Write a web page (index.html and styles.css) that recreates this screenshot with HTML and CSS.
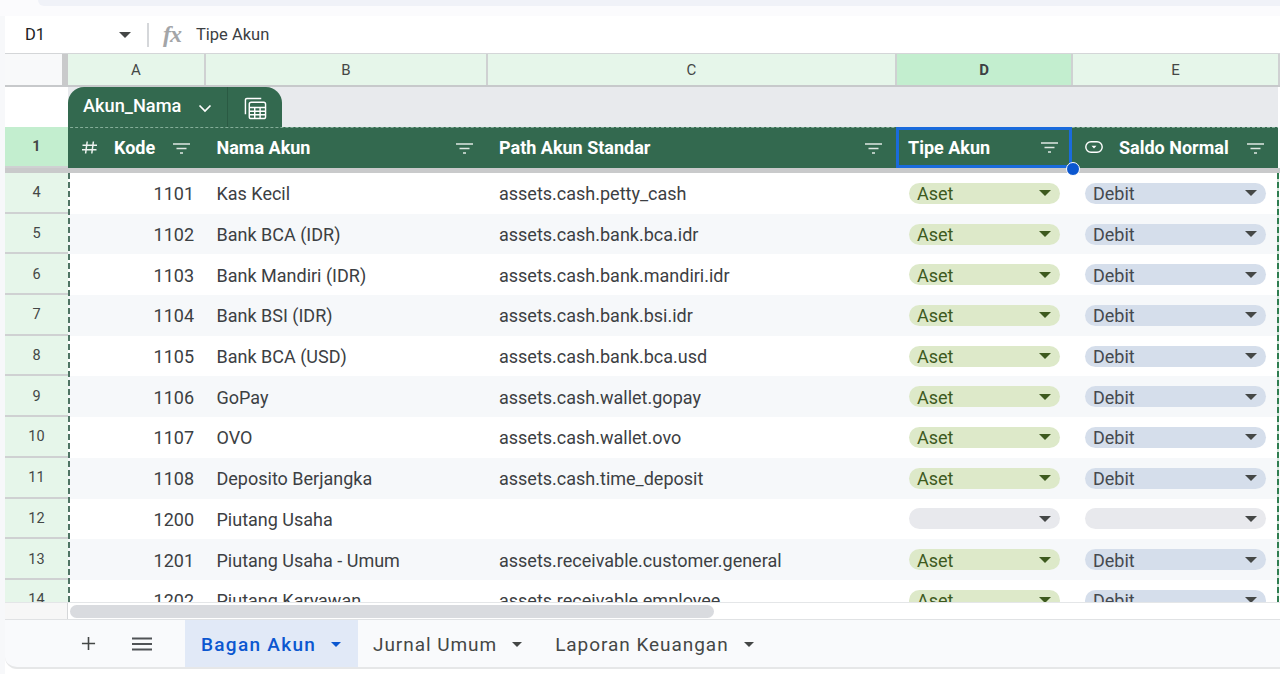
FILE: index.html
```html
<!DOCTYPE html>
<html lang="id">
<head>
<meta charset="utf-8">
<title>Bagan Akun</title>
<link rel="stylesheet" href="styles.css">
</head>
<body>
<svg class="defs" width="0" height="0" aria-hidden="true">
  <symbol id="filter" viewBox="0 0 17 11"><path d="M0 1h17M3.500 5.500h10M7 10h3" fill="none" stroke="currentColor" stroke-width="1.300"/></symbol>
</svg>
<div class="app">
  <div class="topstrip"><div class="searchpill"></div></div>
  <div class="formula">
    <div class="namebox"><span>D1</span><i class="caret dark"></i></div>
    <div class="fdivider"></div>
    <span class="fx">fx</span>
    <span class="fvalue">Tipe Akun</span>
  </div>
  <div class="sheet">
    <div class="colheads">
      <div class="corner"></div>
      <div class="freeze-v"></div>
      <div class="ch">A</div>
      <div class="ch">B</div>
      <div class="ch">C</div>
      <div class="ch selected">D</div>
      <div class="ch">E</div>
    </div>
    <div class="tablebar">
      <div class="tablebar-head"></div>
      <div class="tablebar-rest">
        <div class="tabletab">
          <span class="tablename">Akun_Nama</span>
          <svg class="chev" viewBox="0 0 14 9"><path d="M1.500 1.500 7 7l5.500-5.500" fill="none" stroke="currentColor" stroke-width="1.700"/></svg>
          <span class="tabsep"></span>
          <svg class="calc" viewBox="0 0 24 24" fill="none" stroke="currentColor" stroke-width="1.500"><path d="M1.500 18V3A1.500 1.500 0 0 1 3 1.500H18"/><rect x="5.500" y="5.500" width="17" height="17" rx="2"/><path d="M5.500 11h17M5.500 14.800h17M5.500 18.600h17M11.200 11v11.500M16.800 11v11.500"/></svg>
        </div>
      </div>
    </div>
    <div class="headrow">
      <div class="rh rh-sel">1</div>
      <div class="hc hc-a"><svg class="hash" viewBox="0 0 15 13"><path d="M5.200 0.500 3.600 12.500M11.400 0.500 9.800 12.500M0.500 4.200H15M0 8.800h14.500" fill="none" stroke="currentColor" stroke-width="1.500"/></svg><span class="ht">Kode</span><svg class="fl"><use href="#filter"/></svg></div>
      <div class="hc hc-b"><span class="ht">Nama Akun</span><svg class="fl"><use href="#filter"/></svg></div>
      <div class="hc hc-c"><span class="ht">Path Akun Standar</span><svg class="fl"><use href="#filter"/></svg></div>
      <div class="hc hc-d"><span class="ht">Tipe Akun</span><svg class="fl"><use href="#filter"/></svg><span class="handle"></span></div>
      <div class="hc hc-e"><svg class="chipicon" viewBox="0 0 18 12"><rect x="0.800" y="0.800" width="16.400" height="10.400" rx="5.200" fill="none" stroke="currentColor" stroke-width="1.400"/><path d="M6.500 4.800h5L9 7.500z" fill="currentColor"/></svg><span class="ht">Saldo Normal</span><svg class="fl"><use href="#filter"/></svg></div>
      <div class="head-end"></div>
    </div>
    <div class="freeze-h"></div>
    <div class="rows">
      <div class="row"><div class="rh">4</div><div class="c num">1101</div><div class="c">Kas Kecil</div><div class="c">assets.cash.petty_cash</div><div class="c chipcell"><div class="chip aset">Aset<i class="caret green"></i></div></div><div class="c chipcell e"><div class="chip debit">Debit<i class="caret dark"></i></div></div></div>
      <div class="row alt"><div class="rh">5</div><div class="c num">1102</div><div class="c">Bank BCA (IDR)</div><div class="c">assets.cash.bank.bca.idr</div><div class="c chipcell"><div class="chip aset">Aset<i class="caret green"></i></div></div><div class="c chipcell e"><div class="chip debit">Debit<i class="caret dark"></i></div></div></div>
      <div class="row"><div class="rh">6</div><div class="c num">1103</div><div class="c">Bank Mandiri (IDR)</div><div class="c">assets.cash.bank.mandiri.idr</div><div class="c chipcell"><div class="chip aset">Aset<i class="caret green"></i></div></div><div class="c chipcell e"><div class="chip debit">Debit<i class="caret dark"></i></div></div></div>
      <div class="row alt"><div class="rh">7</div><div class="c num">1104</div><div class="c">Bank BSI (IDR)</div><div class="c">assets.cash.bank.bsi.idr</div><div class="c chipcell"><div class="chip aset">Aset<i class="caret green"></i></div></div><div class="c chipcell e"><div class="chip debit">Debit<i class="caret dark"></i></div></div></div>
      <div class="row"><div class="rh">8</div><div class="c num">1105</div><div class="c">Bank BCA (USD)</div><div class="c">assets.cash.bank.bca.usd</div><div class="c chipcell"><div class="chip aset">Aset<i class="caret green"></i></div></div><div class="c chipcell e"><div class="chip debit">Debit<i class="caret dark"></i></div></div></div>
      <div class="row alt"><div class="rh">9</div><div class="c num">1106</div><div class="c">GoPay</div><div class="c">assets.cash.wallet.gopay</div><div class="c chipcell"><div class="chip aset">Aset<i class="caret green"></i></div></div><div class="c chipcell e"><div class="chip debit">Debit<i class="caret dark"></i></div></div></div>
      <div class="row"><div class="rh">10</div><div class="c num">1107</div><div class="c">OVO</div><div class="c">assets.cash.wallet.ovo</div><div class="c chipcell"><div class="chip aset">Aset<i class="caret green"></i></div></div><div class="c chipcell e"><div class="chip debit">Debit<i class="caret dark"></i></div></div></div>
      <div class="row alt"><div class="rh">11</div><div class="c num">1108</div><div class="c">Deposito Berjangka</div><div class="c">assets.cash.time_deposit</div><div class="c chipcell"><div class="chip aset">Aset<i class="caret green"></i></div></div><div class="c chipcell e"><div class="chip debit">Debit<i class="caret dark"></i></div></div></div>
      <div class="row"><div class="rh">12</div><div class="c num">1200</div><div class="c">Piutang Usaha</div><div class="c"></div><div class="c chipcell"><div class="chip empty"><i class="caret dark"></i></div></div><div class="c chipcell e"><div class="chip empty"><i class="caret dark"></i></div></div></div>
      <div class="row alt"><div class="rh">13</div><div class="c num">1201</div><div class="c">Piutang Usaha - Umum</div><div class="c">assets.receivable.customer.general</div><div class="c chipcell"><div class="chip aset">Aset<i class="caret green"></i></div></div><div class="c chipcell e"><div class="chip debit">Debit<i class="caret dark"></i></div></div></div>
      <div class="row"><div class="rh">14</div><div class="c num">1202</div><div class="c">Piutang Karyawan</div><div class="c">assets.receivable.employee</div><div class="c chipcell"><div class="chip aset">Aset<i class="caret green"></i></div></div><div class="c chipcell e"><div class="chip debit">Debit<i class="caret dark"></i></div></div></div>
    </div>
    <div class="hscroll"><div class="hscroll-head"></div><div class="hscroll-track"><div class="thumb"></div></div></div>
    <div class="tabs">
      <svg class="plus" viewBox="0 0 16 16"><path d="M8 1v14M1 8h14" fill="none" stroke="currentColor" stroke-width="1.700"/></svg>
      <svg class="menu" viewBox="0 0 20 14"><path d="M0 1.500h20M0 7h20M0 12.500h20" fill="none" stroke="currentColor" stroke-width="2"/></svg>
      <div class="tab active"><span>Bagan Akun</span><i class="caret blue"></i></div>
      <div class="tab t2"><span>Jurnal Umum</span><i class="caret dark"></i></div>
      <div class="tab t3"><span>Laporan Keuangan</span><i class="caret dark"></i></div>
    </div>
  </div>
</div>
</body>
</html>
```
FILE: styles.css
```css
* { box-sizing: border-box; }
html, body { margin: 0; padding: 0; height: 100%; overflow: hidden; }
body { font-family: Roboto, "Liberation Sans", sans-serif; color: #3c4043; background: #f7f8fa; }
.defs { position: absolute; }
.app { width: 1280px; height: 674px; display: flex; flex-direction: column; overflow: hidden; padding-left: 5px; }

.caret { display: block; width: 0; height: 0; border-left: 6px solid transparent; border-right: 6px solid transparent; border-top: 6px solid #444746; flex: none; }
.caret.green { border-top-color: #3d5a1e; }
.caret.blue { border-top-color: #0b57d0; }

.topstrip { height: 16px; margin-left: -5px; background: #fbfbfd; flex: none; overflow: hidden; }
.searchpill { height: 6px; margin: 0 0 0 38px; background: #f0f2f8; border-radius: 0 0 0 12px; }

.formula { height: 38px; flex: none; background: #fff; display: flex; align-items: center; border-bottom: 1px solid #d4d6d8; }
.namebox { width: 129px; padding-left: 20px; padding-right: 3px; display: flex; align-items: center; justify-content: space-between; font-size: 16.500px; color: #202124; }
.fdivider { width: 2px; height: 24px; margin-left: 13px; background: #d5d7da; }
.fx { margin-left: 14px; width: 33px; font: italic 700 24px "Liberation Serif", serif; letter-spacing: -1px; color: #a3a5a8; }
.fvalue { font-size: 16.500px; color: #3c4043; }

.sheet { flex: 1; display: flex; flex-direction: column; min-height: 0; background: #fff; }
.colheads { height: 33px; flex: none; display: grid; grid-template-columns: 57px 6px 138px 282px 409px 176px 1fr; border-bottom: 2px solid #c7c9cb; }
.corner { background: #f8f9fa; }
.freeze-v { background: #c9cacb; }
.ch { background: #e6f6ea; border-right: 2px solid #cfd1d2; display: flex; align-items: center; justify-content: center; font-size: 15px; color: #444746; padding-top: 1px; }
.ch.selected { background: #c3eecf; font-weight: 700; color: #3c4043; }

.tablebar { height: 40px; flex: none; display: flex; }
.tablebar-head { width: 63px; background: #fff; }
.tablebar-rest { flex: 1; margin-right: 2px; background: #e8eaed; display: flex; align-items: flex-end; }
.tabletab { height: 40px; width: 214px; padding-left: 15px; background: #33694f; color: #fff; border-radius: 16px 16px 0 0; display: flex; align-items: center; font-size: 18.200px; font-weight: 500; }
.tablename { width: 115px; padding-bottom: 4px; }
.chev { width: 14px; height: 9px; margin-top: 3px; }
.tabsep { width: 1px; height: 40px; background: #2a5a43; margin-left: 15px; }
.calc { width: 23px; height: 23px; margin-left: 16px; margin-top: 3px; }

.headrow { height: 41px; flex: none; display: grid; grid-template-columns: 63px 137px 282px 409px 176px 206px 1fr; background: #33694f; border-top: 1px dashed #84ad98; }
.head-end { background: #fff; margin-top: -1px; }
.rh { background: #e6f6ea; display: flex; align-items: center; justify-content: center; font-size: 14.500px; color: #444746; border-bottom: 2px solid #cfd1d2; padding-top: 1px; }
.rh-sel { background: #c3eecf; font-weight: 700; height: 41px; margin-top: -1px; padding-top: 0; }
.hc { display: flex; align-items: center; color: #fff; font-size: 18px; font-weight: 700; padding-left: 12px; padding-right: 14px; padding-bottom: 2px; position: relative; justify-content: space-between; }
.fl { width: 17px; height: 11px; margin-top: 2px; color: #dfe8e3; flex: none; }
.hc-a { padding-left: 14px; justify-content: flex-start; }
.hc-b { padding-left: 11.500px; }
.hash { width: 15px; height: 13px; margin-right: 17px; color: #eef3f0; flex: none; }
.hc-a .fl { margin-left: 18px; }
.hc-d { border: 3px solid #1a6bdc; padding: 0 11px 0 9px; margin-top: -1px; }
.hc-d .fl { margin-top: 0; }
.hc-e { justify-content: flex-start; padding-left: 13px; }
.chipicon { width: 18px; height: 12px; color: #fff; margin-right: 16px; flex: none; }
.hc-e .fl { margin-left: 18px; }
.handle { position: absolute; right: -10.500px; bottom: -10.500px; width: 14px; height: 14px; border-radius: 50%; background: #0b57d0; border: 1.500px solid #fff; z-index: 3; }

.freeze-h { height: 5px; flex: none; background: #c9cacb; }
.rows { height: 429px; flex: none; overflow: hidden; position: relative; }
.row { height: 40.700px; display: grid; grid-template-columns: 63px 137px 282px 409px 176px 206px 1fr; background: #fff; font-size: 18px; color: #3c4043; }
.row.alt { background: #f6f8fa; }
.c { display: flex; align-items: center; padding-left: 12px; padding-top: 1px; white-space: nowrap; overflow: hidden; }
.c:nth-child(3) { padding-left: 11.500px; }
.c.num { justify-content: flex-end; padding-right: 11px; padding-left: 0; }
.c.chipcell { padding: 0 12px 0 13px; }
.chip { flex: 1; height: 21px; border-radius: 11px; display: flex; align-items: center; justify-content: space-between; padding: 1px 9px 0 8px; }
.chip .caret { margin-top: -1px; }
.aset { background: #dde9c9; color: #3d5a1e; }
.debit { background: #d5deeb; color: #45494f; }
.empty { background: #e8e9ed; justify-content: flex-end; }
.rows::before, .rows::after { content: ""; position: absolute; top: 0; bottom: 0; width: 2px; background: repeating-linear-gradient(to bottom, #4f7464 0 6px, transparent 6px 9px); }
.rows::before { left: 63px; }
.rows::after { right: 1px; background: repeating-linear-gradient(to bottom, #2f7d50 0 6px, #cfe3d6 6px 9px); }

.hscroll { height: 17px; flex: none; display: flex; border-top: 1px solid #e4e6e8; }
.hscroll-head { width: 63px; background: #f7f7f7; border-right: 1px solid #d5d7d9; }
.hscroll-track { flex: 1; padding: 2px 2px; }
.thumb { width: 644px; height: 13px; background: #d9dbdf; border-radius: 7px; }

.tabs { height: 50px; flex: none; background: #f9fafc; border-top: 1px solid #e0e2e4; border-bottom: 2px solid #e6e7e8; border-bottom-left-radius: 12px; display: flex; align-items: center; }
.plus { width: 15px; height: 15px; color: #444746; margin-left: 76px; }
.menu { width: 20px; height: 14px; color: #505356; margin-left: 36px; }
.tab { height: 100%; display: flex; align-items: center; font-size: 19px; font-weight: 400; letter-spacing: .95px; color: #444746; padding-top: 1px; }
.tab .caret { margin-left: 15px; border-left-width: 5.500px; border-right-width: 5.500px; border-top-width: 5.500px; }
.tab.active { width: 173px; margin-left: 33px; padding-left: 16px; background: #e1e9f7; color: #0b57d0; font-weight: 500; letter-spacing: 1.300px; }
.tab.t2 { margin-left: 15px; }
.tab.t3 { margin-left: 33px; }
```
